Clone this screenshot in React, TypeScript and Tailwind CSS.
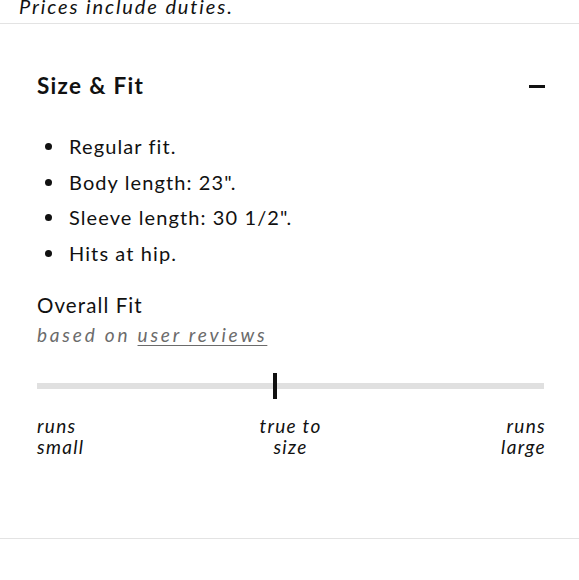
const bullets = [
  "Regular fit.",
  'Body length: 23".',
  'Sleeve length: 30 1/2".',
  "Hits at hip.",
];

function FitScale({ position }: { position: number }) {
  return (
    <div className="mt-[26px]">
      <div className="relative h-[26px]">
        <div className="absolute left-0 right-0 top-[10px] h-[6px] bg-[#e0e0e0]" />
        <div
          className="absolute top-0 h-[26px] w-[4px] -translate-x-1/2 bg-[#111]"
          style={{ left: `${position}%` }}
        />
      </div>
      <div className="mt-[16px] grid grid-cols-3 text-[19px] italic leading-[21px] tracking-[1.3px] text-[#111]">
        <div className="text-left">
          runs
          <br />
          small
        </div>
        <div className="text-center">
          true to
          <br />
          size
        </div>
        <div className="mr-[-2px] text-right">
          runs
          <br />
          large
        </div>
      </div>
    </div>
  );
}

export default function App() {
  return (
    <div className="min-h-[580px] w-full bg-white font-['Lato','Liberation_Sans',sans-serif] text-[#111]">
      <div className="-mt-[6px] border-b border-[#e3e3e3] px-[19px] pb-[5px]">
        <p className="text-[20px] italic leading-[24px] tracking-[1.9px]">
          Prices include duties.
        </p>
      </div>

      <section className="border-b border-[#e3e3e3] pl-[37px] pr-[35px] pt-[48px] pb-[81px]">
        <div className="flex items-center justify-between">
          <h2 className="text-[22.5px] font-bold leading-[28px] tracking-[1.3px]">
            Size &amp; Fit
          </h2>
          <span className="mr-[-1px] block h-[3px] w-[16px] bg-[#111]" />
        </div>

        <ul className="mt-[29px]">
          {bullets.map((item) => (
            <li
              key={item}
              className="flex items-center text-[20px] leading-[35.5px] tracking-[1.1px]"
            >
              <span className="ml-[8px] mr-[17px] h-[7px] w-[7px] shrink-0 rounded-full bg-[#111]" />
              {item}
            </li>
          ))}
        </ul>

        <h3 className="mt-[20px] text-[20.5px] leading-[28px] tracking-[1.1px]">
          Overall Fit
        </h3>
        <p className="mt-[4px] text-[19px] italic leading-[24px] tracking-[2.8px] text-[#6b6b6b]">
          based on <span className="underline underline-offset-[3px]">user reviews</span>
        </p>

        <FitScale position={47} />
      </section>
    </div>
  );
}
